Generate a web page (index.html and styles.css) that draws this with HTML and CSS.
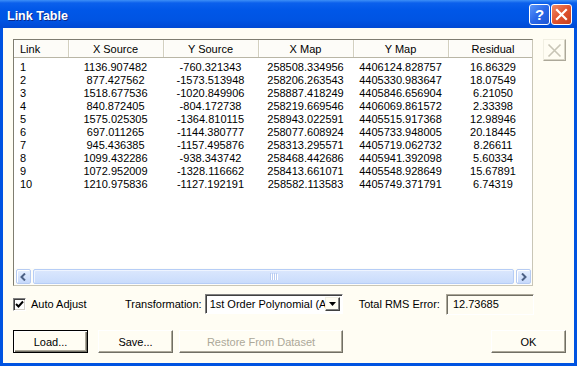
FILE: index.html
```html
<!DOCTYPE html>
<html lang="en">
<head>
  <meta charset="UTF-8">
  <title>Link Table</title>
  <link rel="stylesheet" href="styles.css">
</head>
<body>
  <div class="window">
    <div class="titlebar">
      <span class="title">Link Table</span>
      <div class="caption-buttons">
        <div class="caption-btn help">?</div>
        <div class="caption-btn close">
          <svg width="13" height="13" viewBox="0 0 13 13"><path d="M2 2 L11 11 M11 2 L2 11" stroke="#fff" stroke-width="2.2" stroke-linecap="square"/></svg>
        </div>
      </div>
    </div>
    <div class="client">
      <div class="top-row">
        <div class="listview">
          <div class="list-scroll">
            <table>
              <colgroup>
                <col style="width:54px"><col style="width:95px"><col style="width:95px"><col style="width:95px"><col style="width:95px"><col style="width:90px">
              </colgroup>
              <thead>
                <tr><th class="link">Link</th><th>X Source</th><th>Y Source</th><th>X Map</th><th>Y Map</th><th>Residual</th></tr>
              </thead>
              <tbody>
                <tr><td class="link">1</td><td>1136.907482</td><td>-760.321343</td><td>258508.334956</td><td>4406124.828757</td><td>16.86329</td></tr>
                <tr><td class="link">2</td><td>877.427562</td><td>-1573.513948</td><td>258206.263543</td><td>4405330.983647</td><td>18.07549</td></tr>
                <tr><td class="link">3</td><td>1518.677536</td><td>-1020.849906</td><td>258887.418249</td><td>4405846.656904</td><td>6.21050</td></tr>
                <tr><td class="link">4</td><td>840.872405</td><td>-804.172738</td><td>258219.669546</td><td>4406069.861572</td><td>2.33398</td></tr>
                <tr><td class="link">5</td><td>1575.025305</td><td>-1364.810115</td><td>258943.022591</td><td>4405515.917368</td><td>12.98946</td></tr>
                <tr><td class="link">6</td><td>697.011265</td><td>-1144.380777</td><td>258077.608924</td><td>4405733.948005</td><td>20.18445</td></tr>
                <tr><td class="link">7</td><td>945.436385</td><td>-1157.495876</td><td>258313.295571</td><td>4405719.062732</td><td>8.26611</td></tr>
                <tr><td class="link">8</td><td>1099.432286</td><td>-938.343742</td><td>258468.442686</td><td>4405941.392098</td><td>5.60334</td></tr>
                <tr><td class="link">9</td><td>1072.952009</td><td>-1328.116662</td><td>258413.661071</td><td>4405548.928649</td><td>15.67891</td></tr>
                <tr><td class="link">10</td><td>1210.975836</td><td>-1127.192191</td><td>258582.113583</td><td>4405749.371791</td><td>6.74319</td></tr>
              </tbody>
            </table>
          </div>
          <div class="hscroll">
            <div class="sb-btn">
              <svg width="7" height="8" viewBox="0 0 7 8"><path d="M5 0.5 L1.5 4 L5 7.5" fill="none" stroke="#4d6185" stroke-width="2"/></svg>
            </div>
            <div class="sb-thumb">
              <svg width="8" height="7" viewBox="0 0 8 7"><path d="M0.5 0 V7 M2.5 0 V7 M4.5 0 V7 M6.5 0 V7" stroke="#b9cdf2" stroke-width="1"/><path d="M1.5 1 V8 M3.5 1 V8 M5.5 1 V8 M7.5 1 V8" stroke="#fff" stroke-width="1"/></svg>
            </div>
            <div class="sb-btn">
              <svg width="7" height="8" viewBox="0 0 7 8"><path d="M2 0.5 L5.5 4 L2 7.5" fill="none" stroke="#4d6185" stroke-width="2"/></svg>
            </div>
          </div>
        </div>
        <div class="delete-btn" title="Delete Link">
          <svg width="15" height="15" viewBox="0 0 15 15"><path d="M1.5 1.5 L13.5 13.5 M13.5 1.5 L1.5 13.5" stroke="#c8c5b6" stroke-width="1.6"/></svg>
        </div>
      </div>

      <div class="options">
        <label class="auto-adjust">
          <span class="checkbox">
            <svg width="9" height="9" viewBox="0 0 9 9"><path d="M1 4 L3.5 6.5 L8 1.5" fill="none" stroke="#000" stroke-width="2"/></svg>
          </span>
          Auto Adjust
        </label>
        <span class="field-label">Transformation:</span>
        <div class="select">
          <span class="select-text">1st Order Polynomial (Affine)</span>
          <span class="select-arrow">
            <svg width="7" height="4" viewBox="0 0 7 4"><path d="M0 0 H7 L3.5 4 Z" fill="#000"/></svg>
          </span>
        </div>
        <span class="field-label rms-label">Total RMS Error:</span>
        <div class="rms-box">12.73685</div>
      </div>

      <div class="actions">
        <div class="btn default">Load...</div>
        <div class="btn">Save...</div>
        <div class="btn restore disabled">Restore From Dataset</div>
        <div class="btn ok">OK</div>
      </div>
    </div>
  </div>
</body>
</html>
```
FILE: styles.css
```css
* { margin:0; padding:0; box-sizing:border-box; }
body {
  font-family: "Liberation Sans", Arial, sans-serif;
  font-size:11px;
  color:#000;
  background:#fff;
}
.window {
  width:577px; height:366px;
  display:flex; flex-direction:column;
  background:#0053e1;
}
.titlebar {
  height:28px; flex-shrink:0;
  display:flex; align-items:center;
  padding:0 5px 0 7px;
  background: linear-gradient(to bottom, #3d8ff7 0, #0b60ec 3px, #0057e8 10px, #0054e3 20px, #0049d4 28px);
}
.title {
  flex:1; padding-top:3px;
  color:#fff; font-weight:bold; font-size:12.5px;
  text-shadow:1px 1px 0 #0b2a8c;
}
.caption-buttons { display:flex; gap:1px; align-self:flex-start; margin-top:4px; }
.caption-btn {
  width:21px; height:21px;
  border:1px solid #fff; border-radius:3px;
  display:flex; align-items:center; justify-content:center;
  color:#fff; font-weight:bold; font-size:15px;
}
.caption-btn.help { background: linear-gradient(135deg, #5a95f9 0%, #2a68e9 50%, #1e55d3 100%); }
.caption-btn.close { background: linear-gradient(135deg, #f08a66 0%, #e0532f 50%, #c8401e 100%); }

.client {
  flex:1;
  margin:0 3px 3px;
  background:#fffdf3;
  padding:11px 8px 10px 10px;
  display:flex; flex-direction:column;
}
.top-row { display:flex; gap:10px; height:247px; }

/* list view */
.listview {
  width:520px;
  display:flex; flex-direction:column;
  background:#fff;
  border:1px solid; border-color:#7f7d70 #c9c6b6 #c9c6b6 #7f7d70;
  overflow:hidden;
}
.list-scroll { flex:1; overflow:hidden; }
table { border-collapse:collapse; table-layout:fixed; width:524px; }
th {
  height:17px; padding-top:2px;
  font-weight:normal; text-align:center;
  background:#fdfcf8;
  border-right:1px solid #d3d0c0;
  border-bottom:1px solid #b9b6a6;
  box-shadow: inset 1px 0 #fff;
}
td {
  height:13px; line-height:13px;
  text-align:center; white-space:nowrap; overflow:hidden;
  vertical-align:bottom;
}
th.link, td.link { text-align:left; padding-left:6px; }
tbody tr:first-child td { height:17px; }

.hscroll {
  height:17px; flex-shrink:0;
  display:flex; gap:2px;
  padding:1px 1px 1px 2px;
  background:#fdfdfa;
}
.sb-btn {
  width:15px;
  border:1px solid #b6cbf2; border-radius:2px;
  background: linear-gradient(to bottom, #e6effe, #c6d9fb);
  box-shadow: inset 1px 1px #fff;
  display:flex; align-items:center; justify-content:center;
}
.sb-thumb {
  flex:1;
  border:1px solid #b6cdf6; border-radius:2px;
  background: linear-gradient(to bottom, #dbe7fd, #c9dcfc);
  box-shadow: inset 1px 1px #eef4ff;
  display:flex; align-items:center; justify-content:center;
}

.delete-btn {
  width:23px; height:22px;
  border:1px solid; border-color:#f1efe2 #aca899 #aca899 #f1efe2;
  box-shadow: inset -1px -1px #d8d5c6;
  display:flex; align-items:center; justify-content:center;
}

/* options row */
.options {
  margin-top:7px; height:22px;
  display:flex; align-items:center;
}
.auto-adjust { width:112px; display:flex; align-items:center; gap:5px; }
.checkbox {
  width:13px; height:13px;
  background:#fff;
  border:1px solid; border-color:#808080 #fff #fff #808080;
  box-shadow: inset 1px 1px #404040, inset -1px -1px #d4d0c8;
  display:flex; align-items:center; justify-content:center;
}
.field-label { white-space:nowrap; }
.select {
  width:138px; height:20px; margin-left:3px;
  display:flex;
  background:#fff;
  border:1px solid; border-color:#808080 #fff #fff #808080;
  box-shadow: inset 1px 1px #404040;
  padding:2px;
}
.select-text { flex:1; overflow:hidden; white-space:nowrap; padding-left:2px; line-height:14px; }
.select-arrow {
  width:15px; flex-shrink:0;
  background:#fffdf3;
  border:1px solid; border-color:#f1efe2 #404040 #404040 #f1efe2;
  box-shadow: inset -1px -1px #808080;
  display:flex; align-items:center; justify-content:center;
}
.rms-label { margin-left:16px; }
.rms-box {
  width:88px; height:21px; margin-left:6px;
  padding:3px 0 0 6px;
  border:1px solid; border-color:#aca899 #fff #fff #aca899;
  box-shadow: inset 1px 1px #716f64;
}

/* buttons */
.actions { margin-top:15px; height:23px; display:flex; }
.btn {
  width:75px; height:23px;
  display:flex; align-items:center; justify-content:center;
  background:#fffdf3;
  border:1px solid; border-color:#fff #716f64 #716f64 #fff;
  box-shadow: inset -1px -1px #aca899;
}
.btn + .btn { margin-left:10px; }
.btn.default {
  border-color:#000;
  box-shadow: inset 1px 1px #fff, inset -1px -1px #716f64, inset -2px -2px #aca899;
}
.btn.restore { width:164px; margin-left:6px; }
.btn.disabled { color:#aca899; }
.btn.ok { margin-left:auto; }
```
